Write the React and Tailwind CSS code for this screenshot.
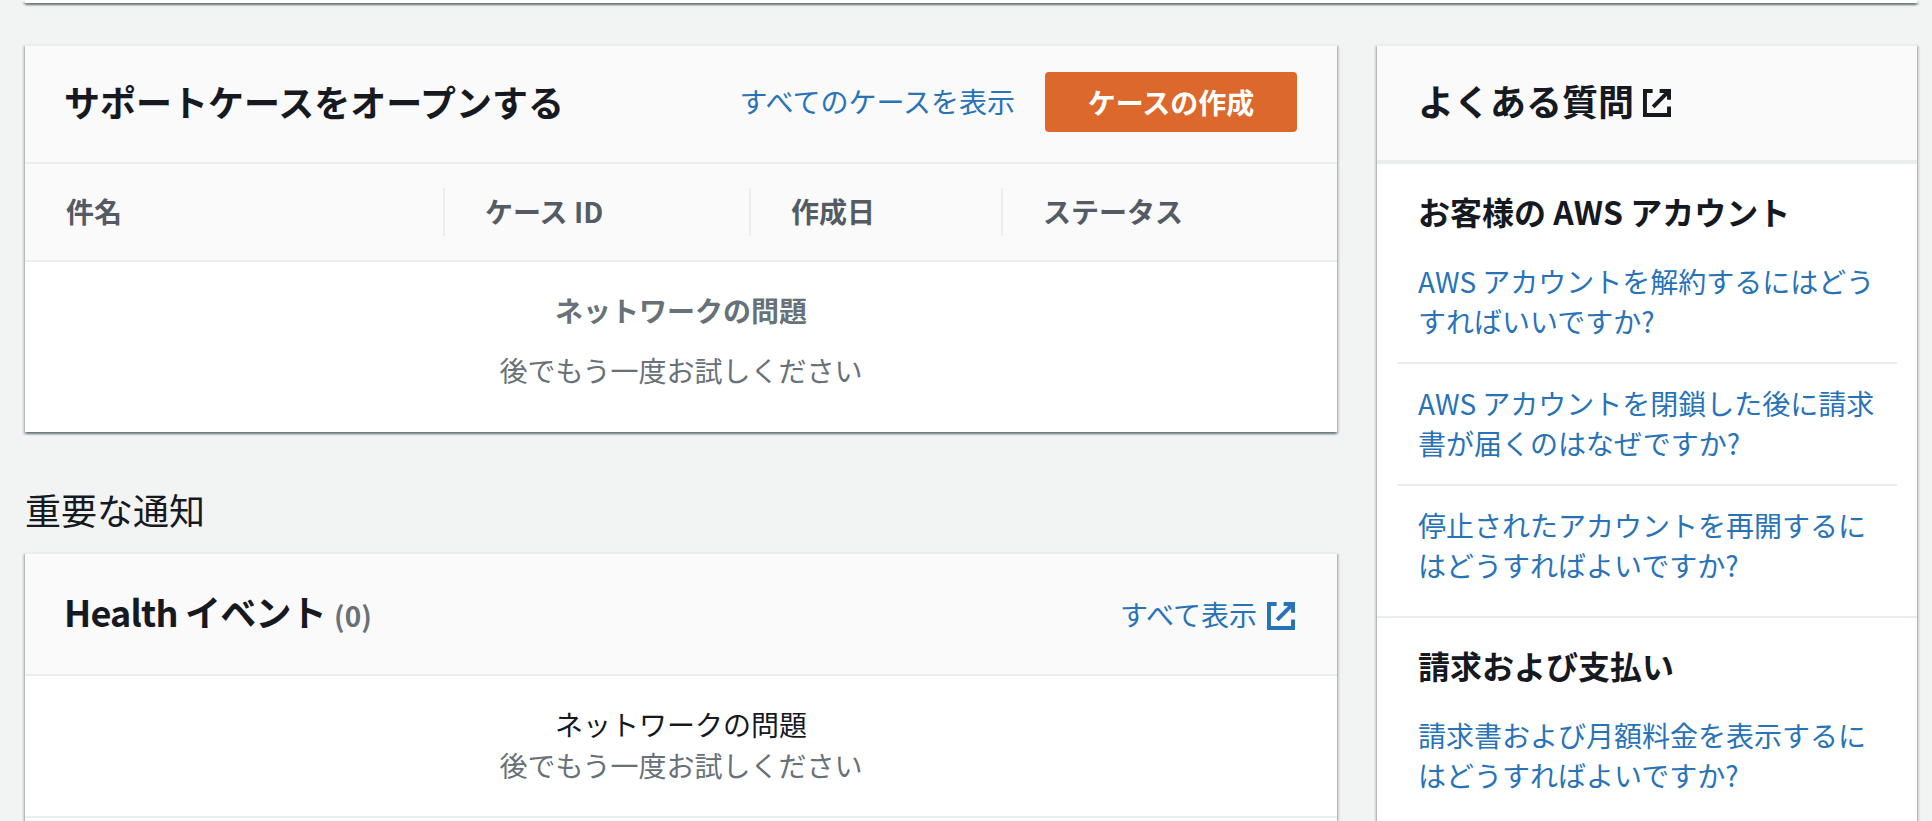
const FONT = "font-['Amazon_Ember','Noto_Sans_CJK_JP','Noto_Sans',sans-serif]";

const CARD_SHADOW = "shadow-[0_2px_2px_0_rgba(0,28,36,0.4),2px_2px_2px_0_rgba(0,28,36,0.15),-2px_2px_2px_0_rgba(0,28,36,0.15)]";

const FAQ = [
  {
    title: "お客様の AWS アカウント",
    links: [
      "AWS アカウントを解約するにはどうすればいいですか?",
      "AWS アカウントを閉鎖した後に請求書が届くのはなぜですか?",
      "停止されたアカウントを再開するにはどうすればよいですか?",
    ],
  },
  {
    title: "請求および支払い",
    links: ["請求書および月額料金を表示するにはどうすればよいですか?"],
  },
];

const COLUMNS = [
  { label: "件名", width: "w-[420px]", pad: "pl-[41px]" },
  { label: "ケース ID", width: "w-[306px]", pad: "pl-10" },
  { label: "作成日", width: "w-[252px]", pad: "pl-10" },
  { label: "ステータス", width: "flex-1", pad: "pl-10" },
];

function ExternalIcon({ className }) {
  return (
    <svg viewBox="0 0 16 16" fill="none" stroke="currentColor" strokeWidth="2.3" className={className}>
      <path d="M5.5 1.1H1.1v13.8h13.8V10" />
      <path d="M9.5 1.1h5.4v5" />
      <path d="M14.9 1.1 5.8 10.2" />
    </svg>
  );
}

function CaseCard() {
  return (
    <div className={`bg-white border-t-2 border-[#eaeded] ${CARD_SHADOW}`}>
      <div className="h-[118px] bg-[#fafafa] flex items-center pb-1 pl-[39px] pr-10 border-b-2 border-[#eaeded]">
        <h2 className="text-[36px] leading-[48px] font-bold text-[#16191f] flex-1 mb-[3px]">サポートケースをオープンする</h2>
        <a className="text-[28px] leading-10 text-[#2873b8] mr-[30px] mb-[3px]">すべてのケースを表示</a>
        <button className="w-[252px] h-[60px] rounded bg-[#dc682c] text-white text-[28px] font-bold">ケースの作成</button>
      </div>
      <div className="h-[98px] bg-[#fafafa] flex items-center border-b-2 border-[#eaeded]">
        {COLUMNS.map((col, i) => (
          <div
            key={col.label}
            className={`${col.width} ${col.pad} h-12 flex items-center border-[#eaeded] ${i < 3 ? "border-r-2" : ""}`}
          >
            <span className="text-[28px] font-bold text-[#545b64] mb-[2px]">{col.label}</span>
          </div>
        ))}
      </div>
      <div className="h-[170px] flex flex-col items-center pt-7 gap-5">
        <p className="text-[28px] leading-10 font-bold text-[#687078]">ネットワークの問題</p>
        <p className="text-[28px] leading-10 text-[#687078]">後でもう一度お試しください</p>
      </div>
    </div>
  );
}

function HealthCard() {
  return (
    <div className={`bg-white border-t-2 border-[#eaeded] ${CARD_SHADOW} min-h-[340px]`}>
      <div className="h-[122px] bg-[#fafafa] flex items-center pl-[39px] pr-[42px] border-b-2 border-[#eaeded]">
        <h2 className="text-[36px] leading-[48px] font-bold text-[#16191f] flex-1 mb-[2px]">
          <span className="tracking-[-0.8px]">Health イベント</span> <span className="text-[28px] text-[#687078]">(0)</span>
        </h2>
        <a className="flex items-center gap-[10px] text-[28px] leading-10 text-[#2873b8]">
          すべて表示
          <ExternalIcon className="w-7 h-7 mt-1" />
        </a>
      </div>
      <div className="h-[142px] flex flex-col items-center pt-7 border-b-2 border-[#eaeded]">
        <p className="text-[28px] leading-10 text-[#16191f]">ネットワークの問題</p>
        <p className="text-[28px] leading-10 text-[#687078] mt-px">後でもう一度お試しください</p>
      </div>
    </div>
  );
}

function FaqCard() {
  return (
    <div className={`bg-white border-t-2 border-[#eaeded] ${CARD_SHADOW} min-h-[800px]`}>
      <div className="h-[118px] bg-[#fafafa] flex items-center gap-[9px] pb-[7px] pl-[41px] border-b-4 border-[#eaeded]">
        <h2 className="text-[36px] leading-[48px] font-bold text-[#16191f]">よくある質問</h2>
        <ExternalIcon className="w-7 h-7 mt-[7px] text-[#16191f]" />
      </div>
      {FAQ.map((section) => (
        <div key={section.title} className="border-b-2 border-[#eaeded] px-5 pt-[27px] pb-[10px]">
          <h3 className="text-[32px] leading-10 font-bold text-[#16191f] pl-[21px]">{section.title}</h3>
          <div className="mt-[30px] flex flex-col">
            {section.links.map((link, i) => (
              <a
                key={link}
                className={`text-[28px] leading-10 text-[#2873b8] pl-[21px] pr-3 pb-[21px] ${i > 0 ? "pt-[19px] border-t-2 border-[#eaeded]" : ""}`}
              >
                {link}
              </a>
            ))}
          </div>
        </div>
      ))}
    </div>
  );
}

export default function App() {
  return (
    <div className={`${FONT} h-[821px] overflow-hidden bg-[#f2f3f3] pl-[25px] pr-[15px]`}>
      <div className={`h-[3px] bg-white ${CARD_SHADOW}`} />
      <div className="flex gap-10 mt-[41px]">
        <div className="w-[1312px] shrink-0">
          <CaseCard />
          <h2 className="mt-[57px] mb-[23px] text-[36px] leading-10 text-[#16191f]">重要な通知</h2>
          <HealthCard />
        </div>
        <div className="flex-1">
          <FaqCard />
        </div>
      </div>
    </div>
  );
}
